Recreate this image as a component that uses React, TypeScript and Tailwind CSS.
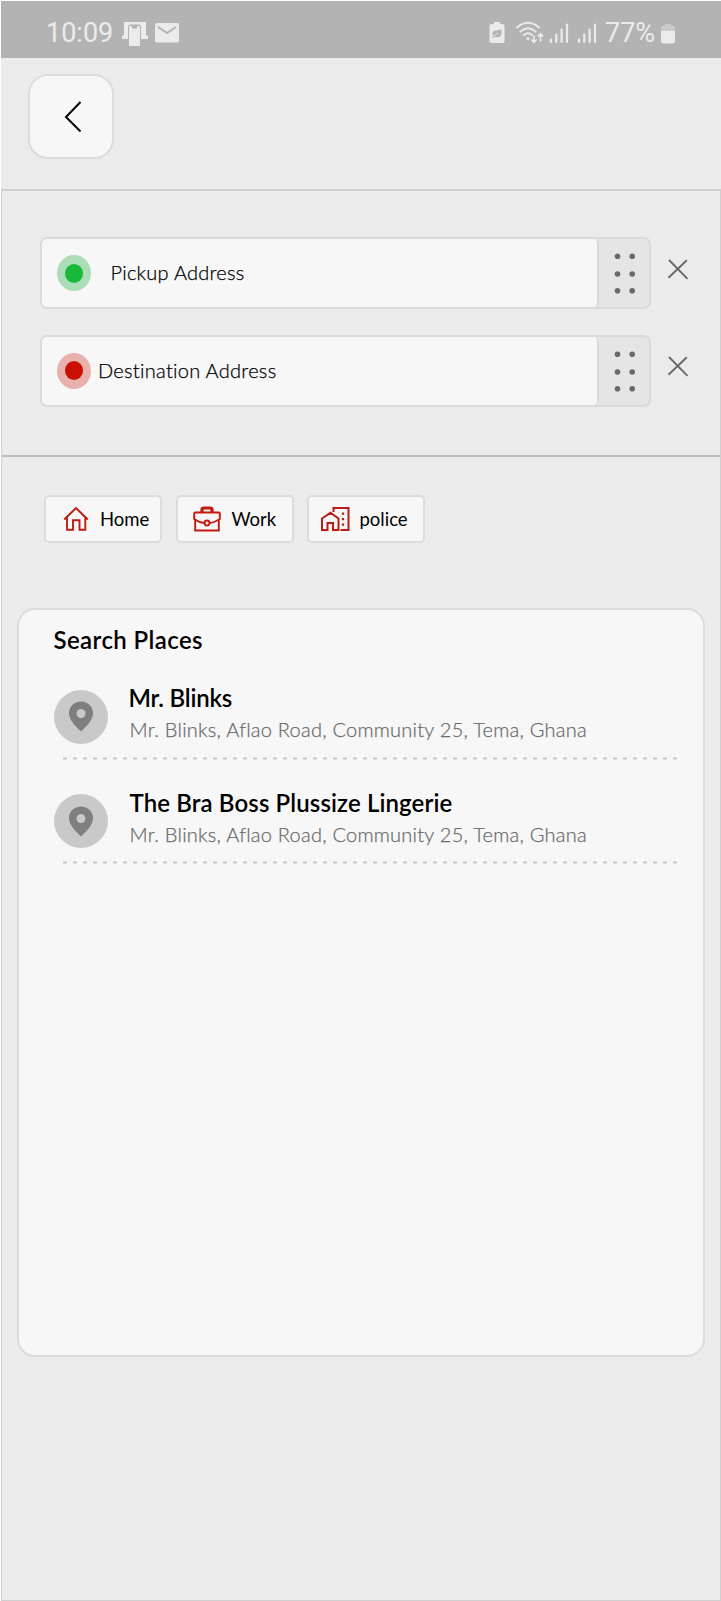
import React from "react";

const StatusBar = () => (
  <div className="flex h-[57px] items-start bg-[#b3b3b3] text-[27px] leading-[32px] text-[#ebebeb] font-['Roboto',sans-serif]">
    <span className="mt-4 ml-[45px] w-[72px] whitespace-nowrap">10:09</span>
    <svg className="mt-[20px] ml-[3px]" width="28" height="26" viewBox="0 0 28 26" fill="#ebebeb">
      <path d="M3 1H25V14.500H27V18H20V6Q20 3.500 17.500 3.500H9.500Q7 3.500 7 6V18H1V14.500H3Z" />
      <path d="M8 6Q8 5 9 5H10.500L11.500 7.500H15.500L16.500 5H18Q19 5 19 6V25H8Z" />
    </svg>
    <svg className="mt-[22px] ml-[6px]" width="24" height="20" viewBox="0 0 24 20">
      <rect width="24" height="19.500" rx="2" fill="#ebebeb" />
      <path d="M3 4L12 10L21 4" fill="none" stroke="#b3b3b3" strokeWidth="2" />
    </svg>
    <svg className="mt-[20px] ml-auto" width="16" height="23" viewBox="0 0 16 23">
      <path d="M5 1H11V3H13.500Q15.500 3 15.500 5V20Q15.500 22 13.500 22H2.500Q.5 22 .5 20V5Q.5 3 2.500 3H5Z" fill="#ebebeb" />
      <path d="M2.500 17L4 15Q2 10 7 9.500L12.500 8.500V12Q12 17.500 6 16Z" fill="#b3b3b3" />
      <path d="M3.500 16L9 12" stroke="#ebebeb" strokeWidth="1" />
    </svg>
    <svg className="mt-[19px] ml-[10px]" width="29" height="24" viewBox="0 0 29 24" fill="none" stroke="#ebebeb" strokeLinecap="round" strokeWidth="2">
      <path d="M2 7.500Q13 -2 24 7.500M5.500 11.500Q13 5 20.500 11.500M9 15Q13 11.500 17 15" />
      <circle cx="13" cy="18.500" r="1.500" fill="#ebebeb" stroke="none" />
      <path d="M19 16V22M16.800 20L19 22.200L21.200 20M25.500 21V14M23.300 16L25.500 13.800L27.700 16" strokeWidth="1.700" />
    </svg>
    <Signal className="mt-[21px] ml-[5px]" />
    <Signal className="mt-[21px] ml-[8px]" />
    <span className="mt-4 ml-[8px] w-[53px] whitespace-nowrap">77%</span>
    <svg className="mt-[22px] mr-[46px] ml-[3px]" width="14" height="21" viewBox="0 0 14 21">
      <path d="M4 1H10V2.500H12Q14 2.500 14 5V8H0V5Q0 2.500 2 2.500H4Z" fill="#cbcbcb" />
      <path d="M0 8H14V18Q14 20.500 11.500 20.500H2.500Q0 20.500 0 18Z" fill="#ebebeb" />
    </svg>
  </div>
);

const Signal = ({ className }: { className: string }) => (
  <svg className={className} width="20" height="22" viewBox="0 0 20 22" stroke="#ebebeb" strokeWidth="2.200" strokeLinecap="round">
    <path d="M2 17.500V20M7.300 12.500V20M12.600 7.500V20M18 2.500V20" />
  </svg>
);

type AddressProps = { label: string; outer: string; inner: string; text: string };

const AddressRow = ({ label, outer, inner, text }: AddressProps) => (
  <div className="flex h-[72px] items-start">
    <div className="flex h-full w-[611px] rounded-[7px] border-2 border-[#dadada] bg-[#e5e5e5]">
      <div className="flex w-[557px] items-center rounded-[5px] border-r-2 border-[#dadada] bg-[#f7f7f7] pl-[14.5px]">
        <div className={`flex h-9 w-[34px] shrink-0 items-center justify-center rounded-[50%] ${outer}`}>
          <div className={`h-[19px] w-[18px] rounded-[50%] ${inner}`} />
        </div>
        <span className={`pb-[2px] text-[20px] leading-6 font-light whitespace-nowrap text-black [-webkit-text-stroke:0.25px_#000] ${text}`}>
          {label}
        </span>
      </div>
      <svg className="mt-[13px] ml-[15px]" width="22" height="44" viewBox="0 0 22 44" fill="#696969">
        {[4.3, 22, 38.7].map((y) => (
          <React.Fragment key={y}>
            <circle cx="3.500" cy={y} r="2.800" />
            <circle cx="18.200" cy={y} r="2.800" />
          </React.Fragment>
        ))}
      </svg>
    </div>
    <svg className="mt-[21.5px] ml-[15.5px]" width="22" height="22" viewBox="0 0 22 22" stroke="#696969" strokeWidth="1.900">
      <path d="M2 1L20.500 19.800M19.800 1.200L1.500 18.800" />
    </svg>
  </div>
);

const Chip = ({ label, text, children }: { label: string; text: string; children: React.ReactNode }) => (
  <div className="flex h-12 w-[118px] items-center rounded-[5px] border-2 border-[#dcdcdc] bg-[#f7f7f7]">
    {children}
    <span className={`text-[18.5px] leading-6 whitespace-nowrap text-black ${text}`}>{label}</span>
  </div>
);

const Place = ({ name, text }: { name: string; text: string }) => (
  <div className="flex h-[104.6px] flex-col">
    <div className="flex h-[74.5px] items-start">
      <div className="mt-[7.5px] flex h-[54px] w-[54px] shrink-0 items-center justify-center rounded-full bg-[#c9c9c9]">
        <svg width="24" height="31" viewBox="0 0 24 31">
          <path fillRule="evenodd" fill="#7f7f7f" d="M12 .5C5.300 .5 0 5.500 0 12.200C0 19 6.500 25 12 30.500C17.500 25 24 19 24 12.200C24 5.500 18.700 .5 12 .5ZM12 8A4.500 4.500 0 1 1 12 17A4.500 4.500 0 1 1 12 8Z" />
        </svg>
      </div>
      <div className="ml-[21px] whitespace-nowrap">
        <p className={`pt-px text-[24px] leading-[30px] font-semibold text-black ${text}`}>{name}</p>
        <p className="mt-[4px] ml-px text-[20px] leading-6 font-light tracking-[0.24px] text-[#6b6b6b] [-webkit-text-stroke:0.25px_#6b6b6b]">
          Mr. Blinks, Aflao Road, Community 25, Tema, Ghana
        </p>
      </div>
    </div>
    <svg className="ml-[8px]" width="616" height="3" viewBox="0 0 616 3">
      <path d="M1 1.500H615" stroke="#c7c7c7" strokeWidth="2" strokeDasharray="4 6" />
    </svg>
  </div>
);

export default function App() {
  return (
    <div className="h-[1601px] w-[721px] bg-white pt-px pl-px font-['Lato',sans-serif]">
      <div className="flex h-[1600px] flex-col bg-[#ebebeb]">
        <StatusBar />
        <header className="h-[130.5px] pt-4 pl-[27px]">
          <button className="flex h-[85px] w-[86px] items-center justify-center rounded-[20px] border-2 border-[#dcdcdc] bg-[#f7f7f7]">
            <svg className="mt-px ml-[4px]" width="18" height="32" viewBox="0 0 18 32" fill="none" stroke="#000" strokeWidth="2">
              <path d="M16.500 1L2 16L16.500 30.500" />
            </svg>
          </button>
        </header>
        <main className="flex-1 border-x border-t-2 border-b border-[#cfcfcf]">
          <section className="flex h-[266.5px] flex-col gap-[25.5px] border-b-2 border-[#bcbcbc] pt-[46.5px] pl-[38px]">
            <AddressRow label="Pickup Address" outer="bg-[#aaddb8]" inner="bg-[#1ab83a]" text="ml-[20px] tracking-[0.25px]" />
            <AddressRow label="Destination Address" outer="bg-[#e9b1ae]" inner="bg-[#ca1005]" text="ml-[7.5px] tracking-[0.29px]" />
          </section>
          <section className="flex gap-[13.5px] pt-[38px] pl-[42px]">
            <Chip label="Home" text="ml-[11px]">
              <svg className="ml-[17px]" width="26" height="26" viewBox="0 0 26 26" fill="none" stroke="#bd1c12" strokeWidth="1.900">
                <path d="M1.200 13.500L13 2L24.800 13.500M4 11V23.800H10V14.300H16.500V23.800H22.300V11" />
              </svg>
            </Chip>
            <Chip label="Work" text="ml-[11px]">
              <svg className="ml-[15px]" width="28" height="26" viewBox="0 0 28 26" fill="none" stroke="#c5180e" strokeWidth="1.900">
                <path d="M9 6V3.500Q9 2 11 2H17Q19 2 19 3.500V6" strokeWidth="3.200" />
                <path d="M1.200 7.500Q1.200 6.500 2.200 6.500H25.800Q26.800 6.500 26.800 7.500V13Q20 17 16.700 17M11.300 17Q6 16.500 1.200 13V7.500M2.200 14V24.500H25.800V14" />
                <circle cx="14" cy="17" r="2.500" />
              </svg>
            </Chip>
            <Chip label="police" text="ml-[10px]">
              <svg className="ml-[10.5px]" width="30" height="26" viewBox="0 0 30 26" fill="none" stroke="#b91c16" strokeWidth="2">
                <path d="M2 12.500L10.500 6.800L18.500 12.500V24H13V17H7.500V24H2ZM13.500 6V2H28.500V24H20.500" />
                <path d="M23 6.500V8.700M23 12V14.200M23 17.500V19.700" strokeWidth="2.200" />
              </svg>
            </Chip>
          </section>
          <section className="mt-[65px] ml-[15px] h-[749px] w-[688px] rounded-[18px] border-2 border-[#dcdcdc] bg-[#f7f7f7] pt-[15px] pl-[34.5px]">
            <h2 className="mb-[27px] text-[24px] leading-[30px] font-semibold tracking-[0.4px] text-black">Search Places</h2>
            <Place name="Mr. Blinks" text="tracking-[-0.2px]" />
            <Place name="The Bra Boss Plussize Lingerie" text="pl-px tracking-[0.12px]" />
          </section>
        </main>
      </div>
    </div>
  );
}
